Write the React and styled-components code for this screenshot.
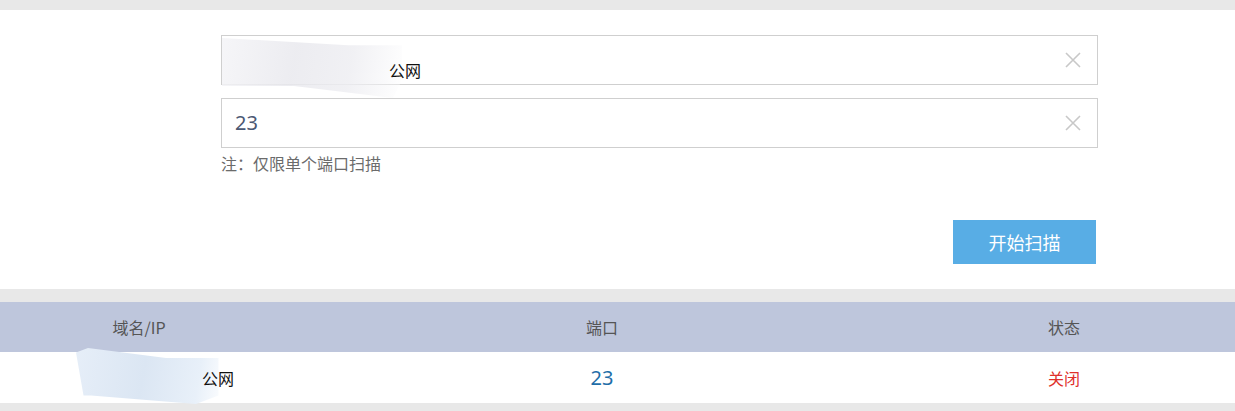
import React from "react";
import styled, { createGlobalStyle } from "styled-components";

const Global = createGlobalStyle`
  html, body { margin: 0; padding: 0; background: #e8e8e8; }
  body { font-family: "Noto Sans", "Noto Sans CJK SC", sans-serif; }
`;

const Page = styled.div`
  width: 1235px;
  height: 411px;
  background: #e8e8e8;
  padding-top: 10px;
  box-sizing: border-box;
  overflow: hidden;
`;

const Panel = styled.div`
  background: #fff;
  height: 279px;
  box-sizing: border-box;
  padding: 25px 137px 0 221px;
  display: flex;
  flex-direction: column;
`;

const Field = styled.div`
  position: relative;
  height: 50px;
  box-sizing: border-box;
  border: 1px solid #cfcfcf;
  display: flex;
  align-items: center;
  padding: 0 13px;
  margin-bottom: ${(p) => p.$gap || 0}px;
  background: #fff;
`;

const Value = styled.span`
  font-size: 20px;
  color: #4b5873;
  line-height: 1;
  flex: 1;
`;

const Tag = styled.span`
  position: relative;
  z-index: 1;
  font-family: "Noto Sans CJK SC", sans-serif;
  font-size: 16px;
  color: #111;
  line-height: 1;
`;

const RedactTop = styled.span`
  position: absolute;
  left: 0;
  top: 2px;
  width: 180px;
  height: 60px;
  background: linear-gradient(100deg, #f4f4f7 0%, #e9e9ee 40%, #eeeef2 70%, rgba(255,255,255,0.4) 100%);
  clip-path: polygon(0 0, 70% 12%, 100% 12%, 100% 70%, 95% 100%, 40% 80%, 0 80%);
  opacity: 0.85;
`;

const TopInner = styled.div`
  flex: 1;
  padding-left: 154px;
  padding-top: 22px;
`;

const Clear = styled.svg`
  width: 18px;
  height: 18px;
  margin-right: 2px;
`;

const Note = styled.div`
  font-family: "Noto Sans CJK SC", sans-serif;
  font-size: 16px;
  color: #6b6b6b;
  margin-top: 5px;
  line-height: 20px;
`;

const Actions = styled.div`
  display: flex;
  justify-content: flex-end;
  margin-top: 47px;
  padding-right: 2px;
`;

const Button = styled.button`
  width: 143px;
  height: 44px;
  border: none;
  background: #58ade5;
  color: #fff;
  font-family: "Noto Sans CJK SC", sans-serif;
  font-size: 18px;
  cursor: pointer;
  padding: 0;
`;

const Table = styled.div`
  margin-top: 13px;
`;

const Row = styled.div`
  display: grid;
  grid-template-columns: 278px 648px 276px 1fr;
  align-items: center;
  height: ${(p) => p.$h}px;
  background: ${(p) => p.$bg};
`;

const Cell = styled.div`
  text-align: center;
  font-family: "Noto Sans CJK SC", sans-serif;
  font-size: ${(p) => p.$size || 16}px;
  color: ${(p) => p.$color || "#555"};
  line-height: 1;
`;

const Num = styled.span`
  font-family: "Noto Sans", sans-serif;
  font-size: 20px;
  color: #1f6ea8;
`;

const IpCell = styled.div`
  position: relative;
  display: flex;
  justify-content: flex-end;
  padding-right: 44px;
  align-items: center;
  height: 100%;
`;

const RedactRow = styled.span`
  position: absolute;
  left: 76px;
  top: -4px;
  width: 150px;
  height: 56px;
  background: linear-gradient(100deg, #e6eef8 0%, #dbe6f3 45%, #e8f0f9 80%, rgba(255,255,255,0.3) 100%);
  clip-path: polygon(0 8%, 8% 0, 60% 18%, 95% 18%, 95% 85%, 80% 100%, 10% 85%, 5% 85%);
`;

const XIcon = () => (
  <Clear viewBox="0 0 18 18">
    <path d="M2 2 L16 16 M16 2 L2 16" stroke="#c8c8c8" strokeWidth="1.6" fill="none" />
  </Clear>
);

export default function App() {
  return (
    <>
      <Global />
      <Page>
        <Panel>
          <Field $gap={13}>
            <RedactTop />
            <TopInner>
              <Tag>公网</Tag>
            </TopInner>
            <XIcon />
          </Field>
          <Field>
            <Value>23</Value>
            <XIcon />
          </Field>
          <Note>注：仅限单个端口扫描</Note>
          <Actions>
            <Button>开始扫描</Button>
          </Actions>
        </Panel>
        <Table>
          <Row $h={50} $bg="#bec6dc">
            <Cell>域名/IP</Cell>
            <Cell>端口</Cell>
            <Cell>状态</Cell>
            <span />
          </Row>
          <Row $h={51} $bg="#fff">
            <IpCell>
              <RedactRow />
              <Tag>公网</Tag>
            </IpCell>
            <Cell><Num>23</Num></Cell>
            <Cell $color="#e0302a">关闭</Cell>
            <span />
          </Row>
        </Table>
      </Page>
    </>
  );
}
